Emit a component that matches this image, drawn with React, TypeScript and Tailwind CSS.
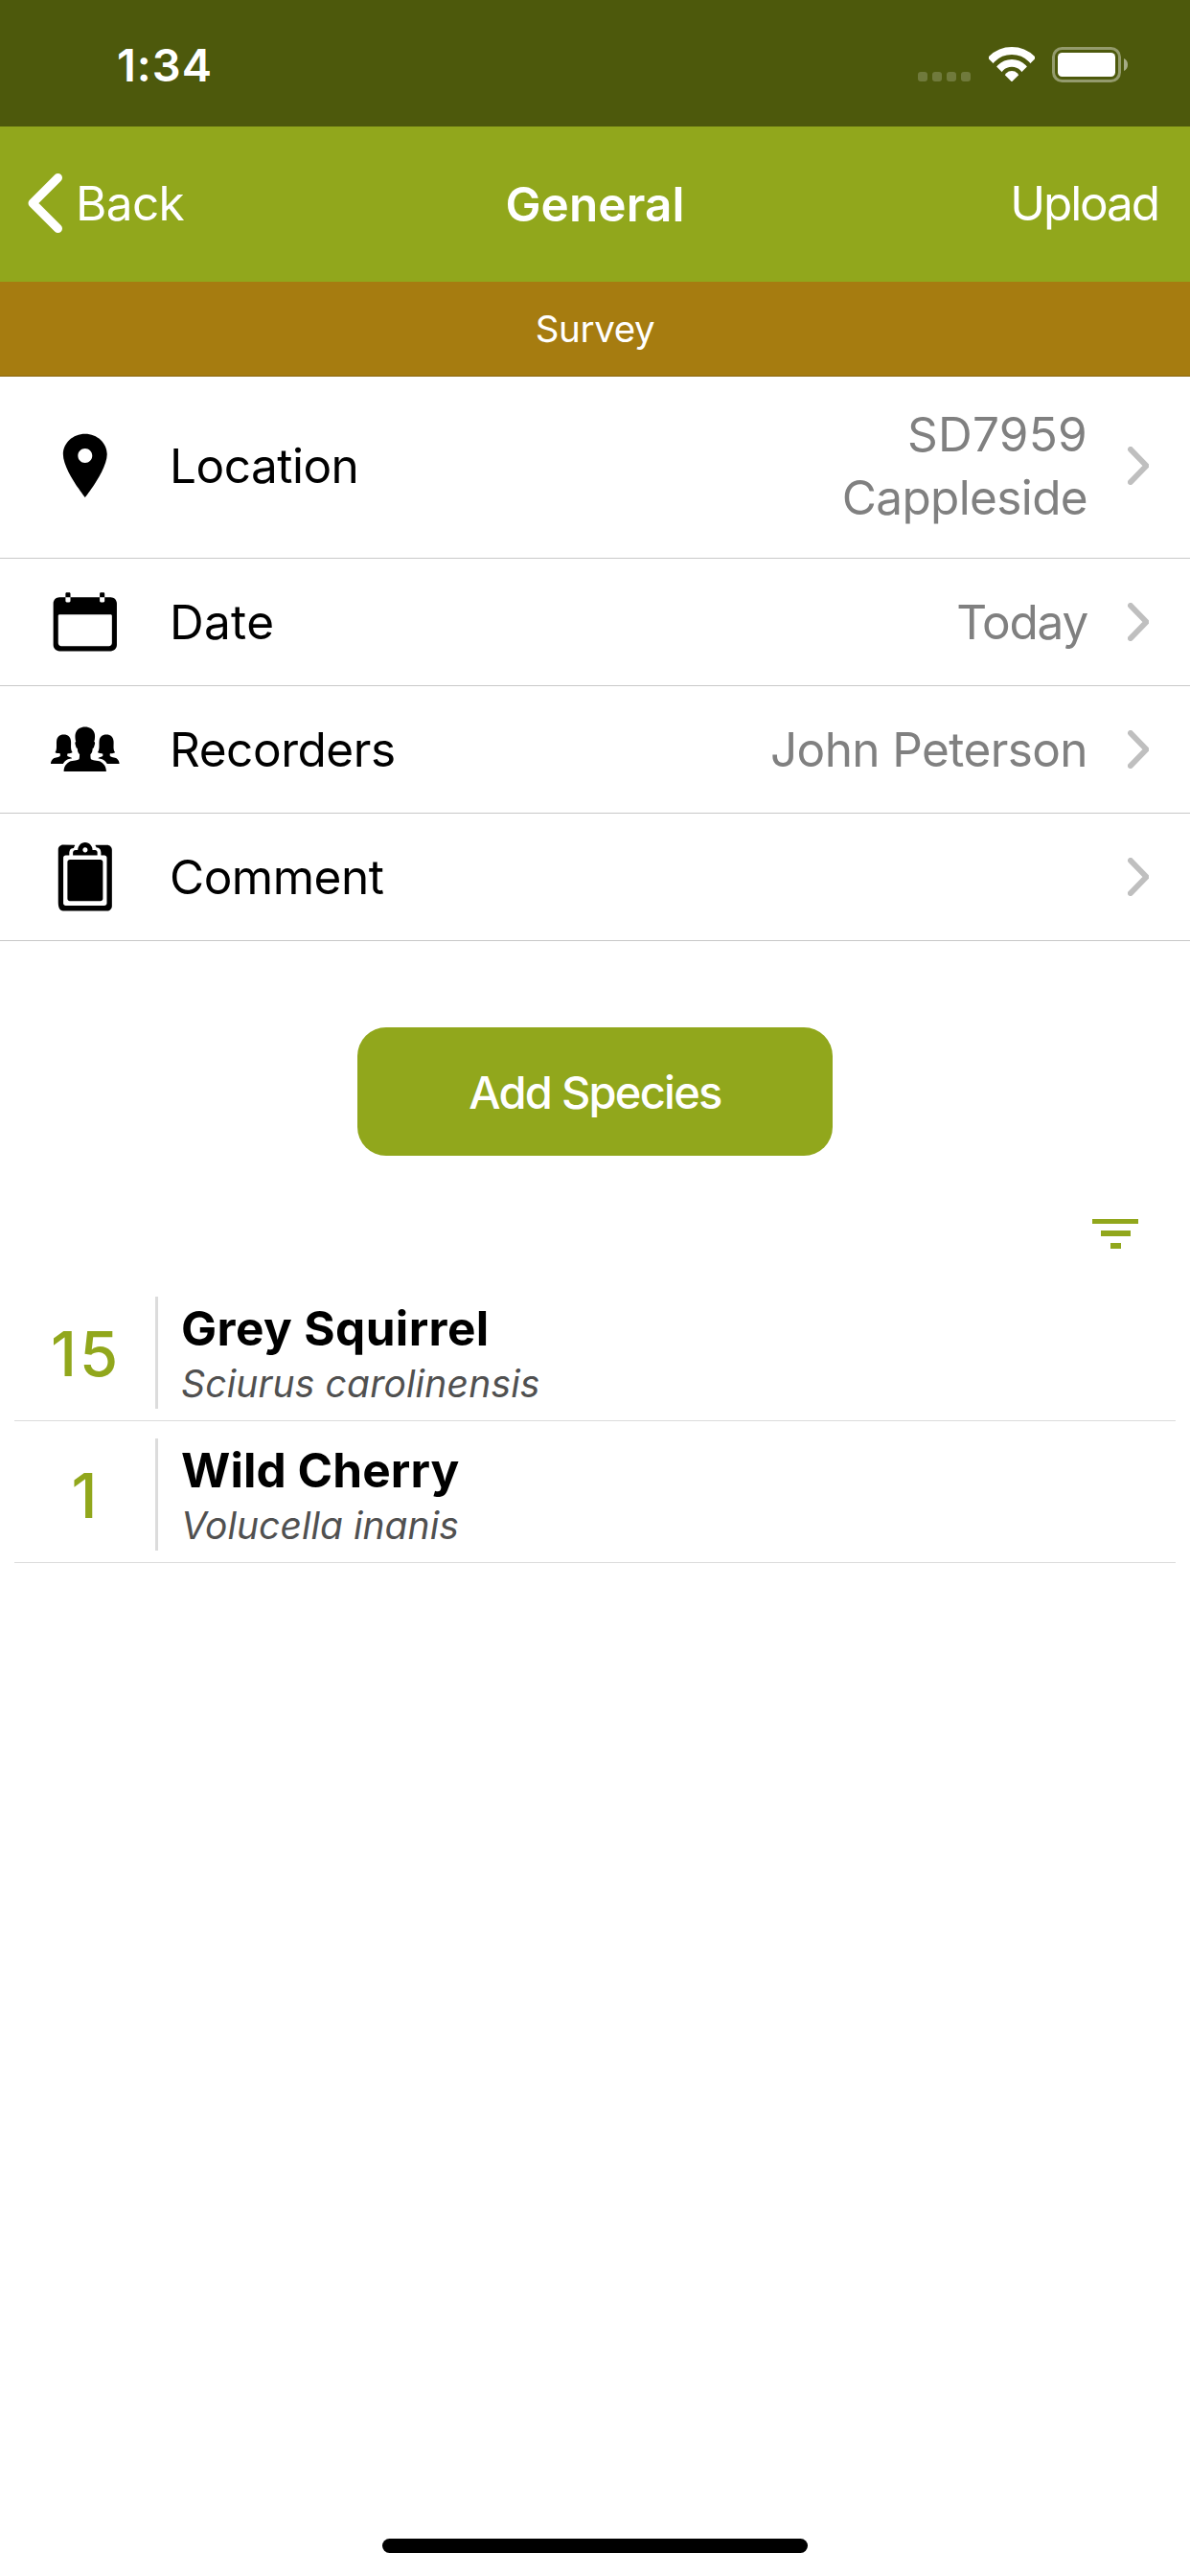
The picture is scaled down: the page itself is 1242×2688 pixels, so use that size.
import type { IconType } from "react-icons";
import { IoIosCalendar, IoIosClipboard, IoIosPeople, IoIosPin } from "react-icons/io";

type Value = { text: string; tracking: string };

type Field = {
  icon: IconType;
  label: string;
  tracking: string;
  values: Value[];
  height: string;
};

const fields: Field[] = [
  {
    icon: IoIosPin,
    label: "Location",
    tracking: "tracking-[-0.5px]",
    values: [
      { text: "SD7959", tracking: "tracking-[0.25px]" },
      { text: "Cappleside", tracking: "tracking-[-0.65px]" },
    ],
    height: "h-[190px] pb-[3px]",
  },
  {
    icon: IoIosCalendar,
    label: "Date",
    tracking: "tracking-[0.3px]",
    values: [{ text: "Today", tracking: "tracking-[-1.25px]" }],
    height: "h-[133px]",
  },
  {
    icon: IoIosPeople,
    label: "Recorders",
    tracking: "tracking-[-0.45px]",
    values: [{ text: "John Peterson", tracking: "tracking-[-0.6px]" }],
    height: "h-[133px]",
  },
  {
    icon: IoIosClipboard,
    label: "Comment",
    tracking: "tracking-[-0.5px]",
    values: [],
    height: "h-[133px]",
  },
];

const species = [
  {
    count: 15,
    name: "Grey Squirrel",
    latin: "Sciurus carolinensis",
    nameTracking: "tracking-[0.4px]",
    latinTracking: "tracking-[0.18px]",
  },
  {
    count: 1,
    name: "Wild Cherry",
    latin: "Volucella inanis",
    nameTracking: "tracking-[0.1px]",
    latinTracking: "tracking-[0.05px]",
  },
];

function WifiIcon() {
  return (
    <svg width="48" height="36" viewBox="0 0 48 36" fill="none">
      <clipPath id="wifi-wedge">
        <path d="M24 36.4L-1 11.4V-2H49V11.4Z" />
      </clipPath>
      <g clipPath="url(#wifi-wedge)">
        <circle cx="24" cy="33.5" r="29.5" stroke="white" strokeWidth="8" />
        <circle cx="24" cy="33.5" r="16.7" stroke="white" strokeWidth="7.8" />
        <circle cx="24" cy="33.5" r="8.4" fill="white" />
      </g>
    </svg>
  );
}

function BatteryIcon() {
  return (
    <svg width="80" height="37" viewBox="0 0 80 37" fill="none">
      <rect x="1.5" y="1.5" width="69" height="34" rx="9" stroke="white" strokeOpacity="0.4" strokeWidth="3" />
      <rect x="6" y="6" width="60" height="25" rx="4.5" fill="white" />
      <path d="M75 12C77.5 13 79 15.5 79 18.5S77.5 24 75 25Z" fill="white" fillOpacity="0.5" />
    </svg>
  );
}

function StatusBar() {
  return (
    <div className="flex h-[132px] justify-between bg-[#4d590c] pl-[122px] pr-[64px] pt-[49px] text-white">
      <span className="h-[37px] text-[47px] font-semibold leading-[37px] tracking-[1px]">1:34</span>
      <div className="flex h-[37px] items-start">
        <div className="mr-[19px] mt-[26px] flex gap-[5px]">
          {[0, 1, 2, 3].map((i) => (
            <span key={i} className="size-[10px] rounded-[3px] bg-white/20" />
          ))}
        </div>
        <WifiIcon />
        <div className="ml-[18px]">
          <BatteryIcon />
        </div>
      </div>
    </div>
  );
}

function NavBar() {
  return (
    <header className="grid h-[162px] grid-cols-3 items-center bg-[#91a71c] px-[33px] text-[49.5px] leading-[66px] text-white">
      <div className="-ml-1 -mt-[2px] flex items-center">
        <svg className="mr-[14px]" width="36" height="62" viewBox="0 0 36 62" fill="none">
          <path d="M31.5 4.5L5 31L31.5 57.5" stroke="white" strokeWidth="9" strokeLinecap="round" strokeLinejoin="round" />
        </svg>
        <span className="tracking-[-0.65px]">Back</span>
      </div>
      <h1 className="text-center font-semibold tracking-[0.1px]">General</h1>
      <span className="-mt-[2px] text-right tracking-[-2.1px]">Upload</span>
    </header>
  );
}

function FieldRow({ icon: Icon, label, tracking, values, height }: Field) {
  return (
    <li className={`flex items-center border-b border-[#c8c8c8] text-[49.5px] leading-[66px] ${height}`}>
      <div className="-mt-px flex w-[177px] justify-center">
        <Icon className="size-[81.6px]" />
      </div>
      <span className={`text-black ${tracking}`}>{label}</span>
      <div className="ml-auto flex flex-col items-end text-[#808080]">
        {values.map((v) => (
          <span key={v.text} className={v.tracking}>
            {v.text}
          </span>
        ))}
      </div>
      <svg className="ml-[42px] mr-[43px]" width="22" height="40" viewBox="0 0 22 40" fill="none">
        <path d="M3 3L19.5 20L3 37" stroke="#bfbfbf" strokeWidth="6" strokeLinecap="round" strokeLinejoin="round" />
      </svg>
    </li>
  );
}

export default function App() {
  return (
    <div className="flex h-[2688px] w-[1242px] flex-col bg-white font-[Inter,sans-serif]">
      <StatusBar />
      <NavBar />
      <div className="flex h-[99px] items-center justify-center border-b border-[#8a6610] bg-[#a67c10] text-[38.5px] leading-[50px] tracking-[-0.4px] text-white">
        Survey
      </div>
      <ul>
        {fields.map((f) => (
          <FieldRow key={f.label} {...f} />
        ))}
      </ul>
      <button className="mt-[90px] h-[134px] w-[496px] self-center rounded-[30px] bg-[#91a71c] pt-[3px] text-[47px] font-medium tracking-[-1.75px] text-white">
        Add Species
      </button>
      <div className="mr-[54px] mt-[66px] flex w-[48px] flex-col items-center gap-[7px] self-end">
        <span className="h-[5px] w-[48px] bg-[#91a71c]" />
        <span className="h-[6px] w-[31px] bg-[#91a71c]" />
        <span className="h-[6px] w-[11px] bg-[#91a71c]" />
      </div>
      <ul className="mx-[15px] mt-[32px]">
        {species.map((s) => (
          <li key={s.name} className="flex h-[148px] border-b border-[#dcdcdc] pb-[12px] pt-[18px]">
            <div className="flex w-[147px] items-center justify-center pl-[2px] pt-[2px] text-[65px] font-medium leading-[80px] tracking-[3px] text-[#91a71c]">
              {s.count}
            </div>
            <div className="flex flex-col border-l-3 border-[#dcdcdc] pl-[24px]">
              <span className={`text-[49.5px] font-bold leading-[66px] text-black ${s.nameTracking}`}>{s.name}</span>
              <span className={`text-[39px] italic leading-[50px] text-[#505050] ${s.latinTracking}`}>{s.latin}</span>
            </div>
          </li>
        ))}
      </ul>
      <div className="mb-[24px] mt-auto h-[15px] w-[444px] self-center rounded-full bg-black" />
    </div>
  );
}
